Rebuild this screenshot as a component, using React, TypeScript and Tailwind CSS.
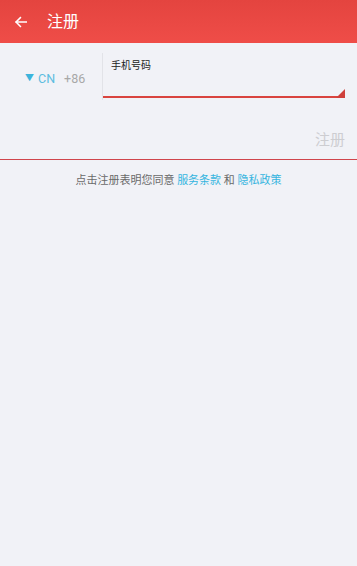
import React from 'react';

export default function App() {
  return (
    <div className="w-[357px] h-[566px] bg-[#f1f2f7] flex flex-col" style={{ fontFamily: 'Roboto, "Noto Sans CJK SC", sans-serif' }}>
      {/* header */}
      <div className="h-[43px] bg-gradient-to-b from-[#e4443f] to-[#ef4d48] flex items-center shrink-0">
        <svg className="ml-[14px] w-[14px] h-[14px]" viewBox="0 0 24 24" fill="none" stroke="white" strokeWidth="2.6" strokeLinecap="square">
          <path d="M21 12H4" />
          <path d="M11 4.5L3.5 12l7.5 7.5" />
        </svg>
        <span className="ml-[19px] text-white text-[16px] leading-none">注册</span>
      </div>

      {/* phone row */}
      <div className="flex h-[47px] mt-[10px]">
        <div className="w-[102px] flex items-center pl-[25px] pt-[5px] text-[12.5px]">
          <span className="text-[#3cb4dc] text-[9px] mr-[4px]">▼</span>
          <span className="text-[#5bbde0]">CN</span>
          <span className="text-[#a8a8a8] ml-[9px]">+86</span>
        </div>
        <div className="flex-1 mr-[12px] border-l border-[#e2e3e8] relative flex flex-col">
          <span className="ml-[8px] mt-[8px] text-[10px] text-[#222] leading-none">手机号码</span>
          <div className="mt-auto mb-[2px] h-[2px] bg-[#d9443f]" />
          <svg className="absolute right-0 bottom-[2px] w-[9px] h-[9px]" viewBox="0 0 9 9">
            <polygon points="9,0 9,9 0,9" fill="#cf403b" />
          </svg>
        </div>
      </div>

      {/* register button */}
      <div className="h-[59px] flex items-end justify-end pr-[12px] pb-[9px]">
        <span className="text-[15px] leading-[20px] text-[#cdcdd1]">注册</span>
      </div>
      <div className="h-px bg-[#d0454c]" />

      {/* terms */}
      <div className="mt-[13px] text-center text-[11px] text-[#6a6a6a]">
        点击注册表明您同意 <span className="text-[#35b5df]">服务条款</span> 和 <span className="text-[#35b5df]">隐私政策</span>
      </div>
    </div>
  );
}
